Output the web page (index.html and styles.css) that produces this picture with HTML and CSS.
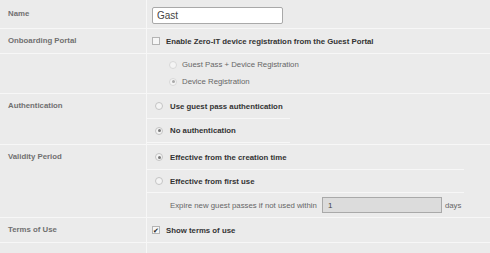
FILE: index.html
```html
<!DOCTYPE html>
<html lang="en">
<head>
    <meta charset="UTF-8">
    <title>Guest Access</title>
    <link rel="stylesheet" href="styles.css">
</head>
<body>
    <div class="form">
        <div class="row">
            <div class="label label-tall">Name</div>
            <div class="value value-name">
                <input type="text" class="name-input" value="Gast">
            </div>
        </div>

        <div class="row">
            <div class="label">Onboarding Portal</div>
            <div class="value">
                <div class="opt opt-check">
                    <span class="box"></span>
                    <span class="strong">Enable Zero-IT device registration from the Guest Portal</span>
                </div>
            </div>
        </div>

        <div class="row">
            <div class="label"></div>
            <div class="value sub-list">
                <div class="sub">
                    <span class="radio disabled"></span>
                    <span>Guest Pass + Device Registration</span>
                </div>
                <div class="sub">
                    <span class="radio checked disabled"></span>
                    <span>Device Registration</span>
                </div>
            </div>
        </div>

        <div class="row">
            <div class="label">Authentication</div>
            <div class="value group-auth">
                <div class="opt lined first">
                    <span class="radio"></span>
                    <span class="strong">Use guest pass authentication</span>
                </div>
                <div class="opt lined">
                    <span class="radio checked"></span>
                    <span class="strong">No authentication</span>
                </div>
            </div>
        </div>

        <div class="row">
            <div class="label">Validity Period</div>
            <div class="value group-valid">
                <div class="opt lined first">
                    <span class="radio checked"></span>
                    <span class="strong">Effective from the creation time</span>
                </div>
                <div class="opt lined short">
                    <span class="radio"></span>
                    <span class="strong">Effective from first use</span>
                </div>
                <div class="opt expire">
                    <span>Expire new guest passes if not used within</span>
                    <input type="text" class="days-input" value="1">
                    <span>days</span>
                </div>
            </div>
        </div>

        <div class="row">
            <div class="label">Terms of Use</div>
            <div class="value">
                <div class="opt opt-check">
                    <span class="box checked">&#10004;</span>
                    <span class="strong">Show terms of use</span>
                </div>
            </div>
        </div>

        <div class="row row-empty">
            <div class="label"></div>
            <div class="value"></div>
        </div>
    </div>
</body>
</html>
```

FILE: styles.css
```css
* {
    box-sizing: border-box;
}

body {
    margin: 0;
    background-color: #ebebeb;
    font-family: 'Liberation Sans', Arial, sans-serif;
    font-size: 7.8px;
    color: #666;
    width: 490px;
    height: 253px;
    overflow: hidden;
}

.row {
    display: grid;
    grid-template-columns: 147px 1fr;
    border-bottom: 1px solid #f7f7f7;
}

.label {
    border-right: 1px solid #f7f7f7;
    padding: 0 8px;
    line-height: 24px;
    font-weight: bold;
    color: #707070;
}

.label-tall {
    line-height: 28px;
}

.value-name {
    height: 28px;
    padding: 7px 0 0 5px;
}

.name-input {
    display: block;
    width: 131px;
    height: 17px;
    border: 1px solid #a9a9a9;
    border-radius: 2px;
    background: #fff;
    padding: 0 4px;
    font-family: 'Liberation Sans', Arial, sans-serif;
    font-size: 10px;
    color: #444;
    outline: none;
}

.opt {
    display: flex;
    align-items: center;
    height: 24px;
    padding-left: 8px;
    gap: 7px;
}

.opt-check {
    padding-left: 5px;
    gap: 6px;
}

.strong {
    font-weight: bold;
    color: #333;
}

.lined {
    border-bottom: 1px solid #f7f7f7;
}

.first {
    height: 25px;
}

.group-auth {
    padding-bottom: 1px;
}

.group-auth .opt {
    width: 143px;
}

.group-valid .lined {
    width: 317px;
}

.short {
    height: 23px;
}

.expire {
    padding-left: 23px;
    gap: 0;
}

.days-input {
    width: 120px;
    height: 16px;
    margin: 0 3px 0 5px;
    border: 1px solid #a9a9a9;
    background: #dcdcdc;
    padding: 0 5px;
    font-family: 'Liberation Sans', Arial, sans-serif;
    font-size: 8px;
    color: #444;
    outline: none;
}

.sub-list {
    padding: 2px 0 3px;
}

.sub {
    display: flex;
    align-items: center;
    height: 17px;
    padding-left: 22px;
    gap: 5px;
}

.radio {
    width: 8px;
    height: 8px;
    border-radius: 50%;
    border: 1px solid #c4c4c4;
    background: #f4f4f4;
    display: flex;
    align-items: center;
    justify-content: center;
    flex: none;
}

.radio.checked::after {
    content: "";
    width: 3px;
    height: 3px;
    border-radius: 50%;
    background: #7a7a7a;
}

.radio.disabled {
    border-color: #d8d8d8;
}

.radio.disabled.checked::after {
    background: #a8a8a8;
}

.box {
    width: 8px;
    height: 8px;
    border: 1px solid #b4b4b4;
    background: #f6f6f6;
    flex: none;
    display: flex;
    align-items: center;
    justify-content: center;
    font-size: 7px;
    line-height: 1;
    color: #222;
}

.row-empty {
    height: 20px;
}
```
